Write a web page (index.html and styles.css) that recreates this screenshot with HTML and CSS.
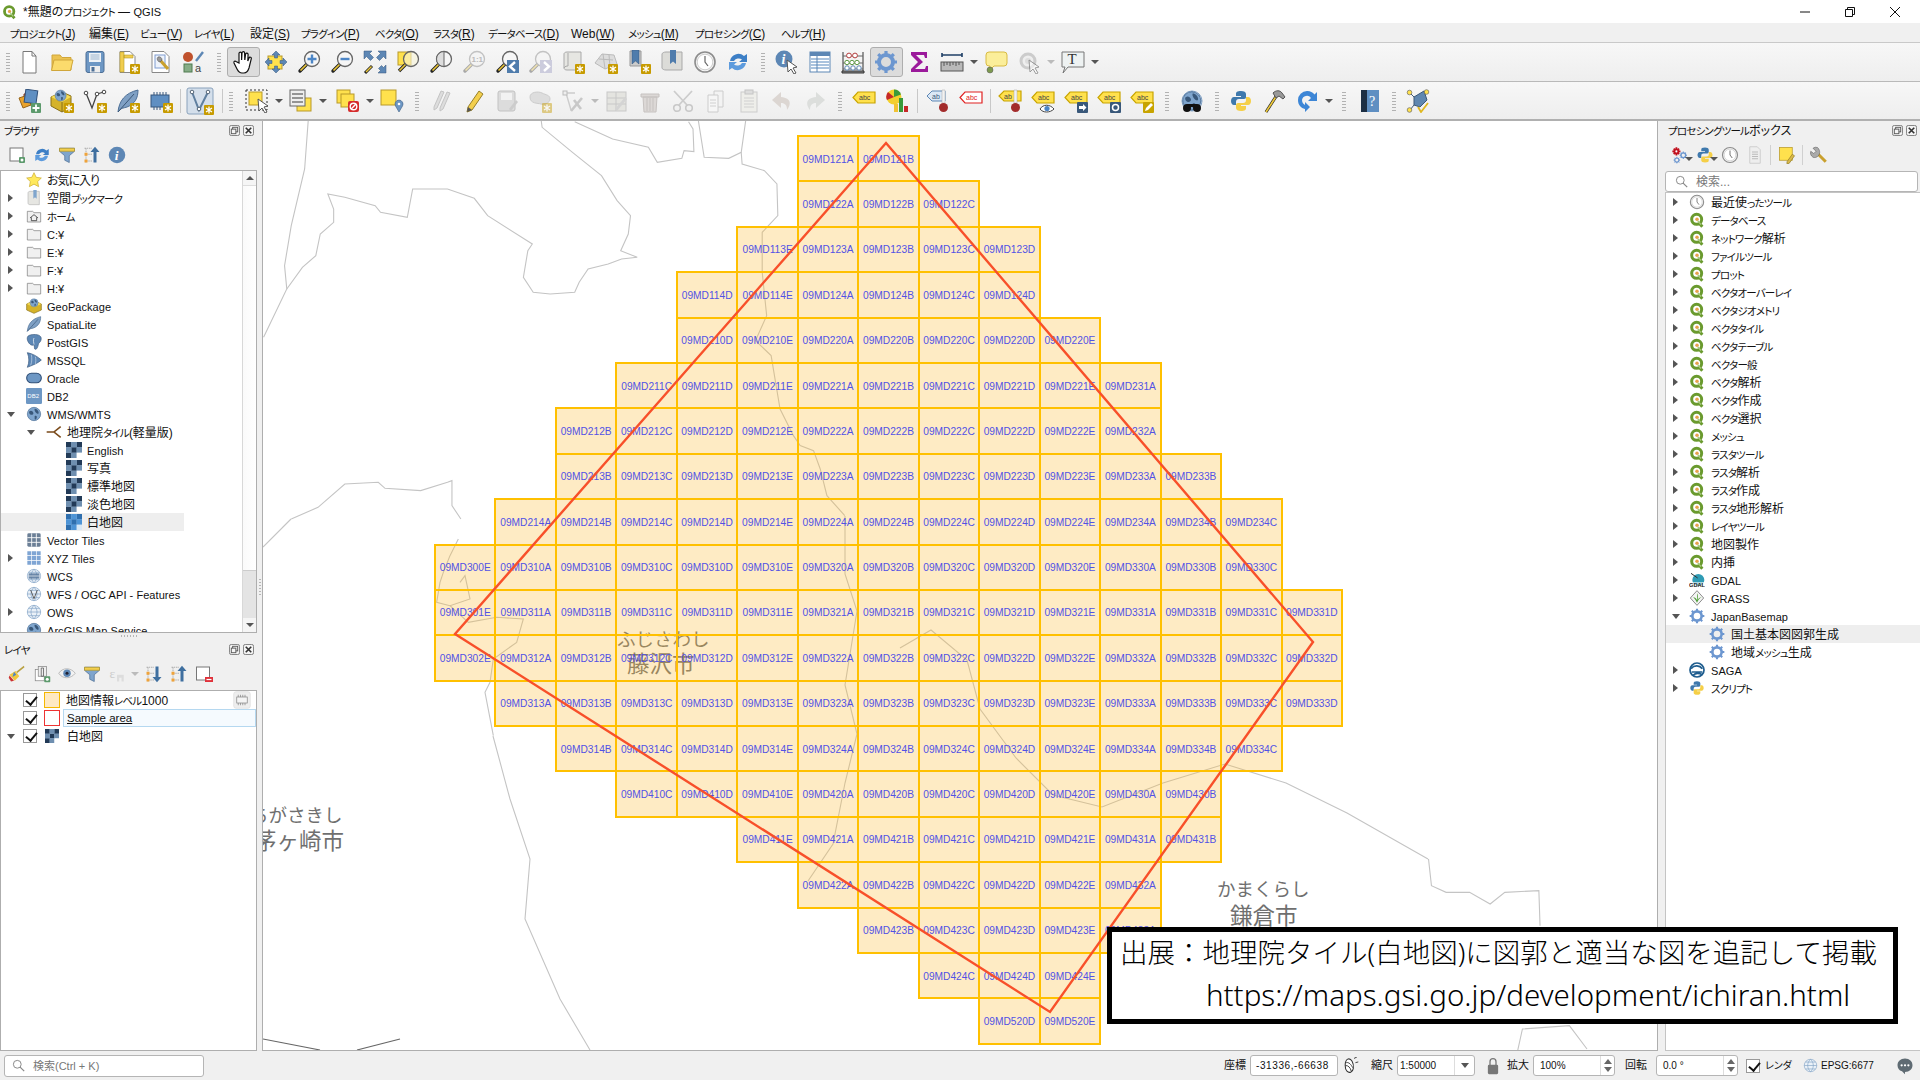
FILE: index.html
```html
<!DOCTYPE html>
<html lang="ja">
<head>
<meta charset="utf-8">
<title>*無題のプロジェクト — QGIS</title>
<link rel="stylesheet" href="styles.css">
</head>
<body>
<svg class="defs" aria-hidden="true">
<defs>
<g id="badge"><rect x="14" y="14" width="10" height="10" rx="1" fill="#c79b00"/><path d="M19 15.5v7M16 17l6 4M22 17l-6 4" stroke="#fff" stroke-width="1.3"/></g>
<g id="mag"><path d="M10 14L3 21" stroke="#222" stroke-width="3.4" stroke-linecap="round"/><path d="M9.5 14.5L3.5 20.5" stroke="#edc93a" stroke-width="1.6"/><circle cx="15" cy="9" r="7.5" fill="#f6f6f6" stroke="#666" stroke-width="1.3"/></g>
<g id="magd" opacity=".35"><use href="#mag"/></g>
<g id="tag"><path d="M6 3h17v11H6L1 8.500z" fill="#ffe14d" stroke="#c8a400" stroke-width="1.2"/><text x="7" y="11" font-size="7" font-family="Liberation Sans" fill="#444">abc</text></g>
<g id="globe"><circle cx="12" cy="12" r="10" fill="#7fa5cd" stroke="#4d6f96"/><path d="M5 8c3-2 5 0 6 2s-2 4-4 3-3-3-2-5zM13 4c3 0 6 3 6 6s-3 1-4 0-3-4-2-6zM13 15c2-1 4 0 3 3s-3 3-3 1z" fill="#39587a"/></g>
<g id="wire"><circle cx="12" cy="12" r="10" fill="#eaf1f8" stroke="#7fa0c4"/><path d="M2 12h20M12 2c-6 6-6 14 0 20M12 2c6 6 6 14 0 20M4 6.500h16M4 17.500h16" fill="none" stroke="#7fa0c4"/></g>
<g id="star"><path d="M12 1l3.300 7 7.700 1-5.500 5.300 1.400 7.700-6.900-3.800-6.900 3.800 1.400-7.700L1 9l7.700-1z" fill="#ffe95c" stroke="#c9a82a"/></g>
<g id="folder"><path d="M2 5h8l2 2h10v14H2z" fill="#f0f0f0" stroke="#777"/></g>
<g id="qlogo"><path d="M13 14l7 8" stroke="#6a9a2e" stroke-width="4.500"/><circle cx="11.500" cy="11" r="7.500" fill="#fff" stroke="#6a9a2e" stroke-width="4.500"/><circle cx="12" cy="11" r="2.600" fill="#e8a04a"/><path d="M13 13l5 6" stroke="#a9c97e" stroke-width="2"/></g>
<g id="tile"><path fill="#a9c2dc" d="M0 0h24v24H0z"/><path fill="#223a57" d="M0 0h8v8H0zM16 0h8v8h-8zM8 8h8v8H8zM0 16h8v8H0z"/><path fill="#6f8fb0" d="M8 0h8v8H8zM0 8h8v8H0zM16 8h8v8h-8zM8 16h8v8H8z"/><path fill="#fff" d="M16 16h8v8h-8z"/></g>
<g id="tileb"><path fill="#a9c8e8" d="M0 0h24v24H0z"/><path fill="#2f6fae" d="M0 0h8v8H0zM16 0h8v8h-8zM8 8h8v8H8zM0 16h8v8H0z"/><path fill="#4d94d6" d="M8 0h8v8H8zM0 8h8v8H0zM16 8h8v8h-8zM8 16h8v8H8z"/><path fill="#d7e8f7" d="M16 16h8v8h-8z"/></g>
<g id="gear"><circle cx="12" cy="12" r="7" fill="none" stroke="#6d97d0" stroke-width="4"/><path d="M12 1v5M12 18v5M1 12h5M18 12h5M4.200 4.200l3.500 3.500M16.300 16.300l3.500 3.500M19.800 4.200l-3.500 3.500M7.700 16.300l-3.500 3.500" stroke="#6d97d0" stroke-width="3.200"/></g>
<g id="pypy"><path d="M12 2c-4 0-5 1-5 3v2h5v1H5c-2 0-3 2-3 4s1 4 3 4h2v-3c0-2 1-3 3-3h5c1.500 0 2-1 2-2V5c0-2-2-3-5-3z" fill="#3f79ad"/><path d="M12 22c4 0 5-1 5-3v-2h-5v-1h7c2 0 3-2 3-4s-1-4-3-4h-2v3c0 2-1 3-3 3H9c-1.500 0-2 1-2 2v3c0 2 2 3 5 3z" fill="#f5cf47"/></g>
<g id="clock"><circle cx="12" cy="12" r="10" fill="#f4f4f4" stroke="#8d8d8d" stroke-width="1.600"/><circle cx="12" cy="12" r="7.800" fill="#fff" stroke="#cfcfcf"/><path d="M12 6v6l3 4" fill="none" stroke="#666" stroke-width="1.200"/></g>
<g id="cursor"><path d="M12 10l10 7-4 1 3 5-2 1-3-5-3 3z" fill="#fff" stroke="#555" stroke-width="1"/></g>
<g id="refr"><path d="M4 11a8.500 8.500 0 0 1 14-5l3-2v8h-8l3-2.500a5.500 5.500 0 0 0-8 1.500z" fill="#3d7fc6"/><path d="M20 13a8.500 8.500 0 0 1-14 5l-3 2v-8h8l-3 2.500a5.500 5.500 0 0 0 8-1.500z" fill="#5d9bdd"/></g>
<g id="filt"><path d="M2 3h20v4l-7 6v9l-6-3v-6L2 7z" fill="#7fa5cd" stroke="#4d6f96"/><path d="M2 3h20v4H2z" fill="#f3cf4d" stroke="#b59a2c"/></g>

<symbol id="i-new" viewBox="0 0 24 24"><path d="M6 1.500h9l4 4.500v17H6z" fill="#fff" stroke="#777"/><path d="M15 1.500V6h4" fill="none" stroke="#777"/></symbol>
<symbol id="i-open" viewBox="0 0 24 24"><path d="M2 20V5h8l2 2.500h9V20z" fill="#ecc352" stroke="#d0a63a"/><path d="M1.500 20.500L4 10h19l-2.500 10.500z" fill="#fbdb6c" stroke="#d0a63a"/></symbol>
<symbol id="i-save" viewBox="0 0 24 24"><rect x="3" y="1.500" width="18" height="21" rx="2" fill="#6d97c4" stroke="#4d6f96"/><path d="M6 3h12v9H6z" fill="#eef2f6"/><path d="M7.500 5h9M7.500 7h9M7.500 9h9" stroke="#9db6cf"/><path d="M7 16h10v6.500H7z" fill="#eee"/><path d="M8.500 17h3v4.500h-3z" fill="#4d6f96"/></symbol>
<symbol id="i-layout" viewBox="0 0 24 24"><path d="M4 1.500h10l5 5v16H4z" fill="#fff" stroke="#888"/><path d="M4 2h4v20H4zM8 5h9v3H8z" fill="#f1cd4e" stroke="#b69a2a" stroke-width=".6"/><use href="#badge"/></symbol>
<symbol id="i-lman" viewBox="0 0 24 24"><path d="M3 1.500h12l5 5v16H3z" fill="#fff" stroke="#888"/><rect x="6" y="5" width="10" height="13" fill="#eef3fb" stroke="#7f9cd0"/><path d="M11 10l8 9" stroke="#c9a02e" stroke-width="3.200"/><path d="M9 7a3 3 0 0 0 2 5l2-2a3 3 0 0 0-4-3z" fill="#999" stroke="#555" stroke-width=".6"/></symbol>
<symbol id="i-style" viewBox="0 0 24 24"><circle cx="6" cy="7" r="5" fill="#c0522d"/><path d="M14 11L21 2" stroke="#5d87b5" stroke-width="2.400"/><rect x="2" y="14" width="8" height="8" fill="#86ac86" stroke="#4f7a4f"/><text x="13" y="22" font-size="11" font-family="Liberation Sans" fill="#444">a</text></symbol>
<symbol id="i-hand" viewBox="0 0 24 24"><path d="M8 13V3.500a1.300 1.300 0 0 1 2.600 0V10l.4-7a1.300 1.300 0 0 1 2.600 0l.2 7 .8-6a1.300 1.300 0 0 1 2.500.3L16.800 11l1.200-3a1.200 1.200 0 0 1 2.300.7L18 18c-1 3-2 5-5 5h-2c-3 0-4-2-5-4l-3-6c-.5-1.500 1-2.500 2-1.500z" fill="#fff" stroke="#111" stroke-width="1.200"/></symbol>
<symbol id="i-pansel" viewBox="0 0 24 24"><rect x="4" y="6" width="14" height="13" fill="#ffe14d" stroke="#b8992a"/><path d="M12 1l4 4h-2.500v3h-3V5H8zM12 23l-4-4h2.500v-3h3v3H16zM1 12l4-4v2.500h3v3H5V16zM23 12l-4 4v-2.500h-3v-3h3V8z" fill="#5d87b5" stroke="#34567c" stroke-width=".5"/></symbol>
<symbol id="i-zin" viewBox="0 0 24 24"><use href="#mag"/><path d="M15 4.500v9M10.500 9h9" stroke="#4d86c6" stroke-width="2.400"/></symbol>
<symbol id="i-zout" viewBox="0 0 24 24"><use href="#mag"/><path d="M10.500 9h9" stroke="#4d86c6" stroke-width="2.400"/></symbol>
<symbol id="i-zfull" viewBox="0 0 24 24"><path d="M1 1h8L6.500 3.500l4 4-3 3-4-4L1 9zM23 1v8l-2.500-2.500-4 4-3-3 4-4L15 1zM23 23h-8l2.500-2.500-2-2 3-3 2 2L23 15z" fill="#5d87b5" stroke="#34567c" stroke-width=".5"/><g transform="translate(1 2)"><path d="M8 14L1 21" stroke="#222" stroke-width="3"/><path d="M7.500 14.500L2 20" stroke="#edc93a" stroke-width="1.400"/></g></symbol>
<symbol id="i-zsel" viewBox="0 0 24 24"><rect x="2" y="2" width="13" height="13" fill="#ffe14d" stroke="#b8992a"/><path d="M10 14L3 21" stroke="#222" stroke-width="3.400"/><path d="M9.500 14.500L3.500 20.500" stroke="#edc93a" stroke-width="1.600"/><circle cx="15" cy="9" r="7.500" fill="#f8f5d8" fill-opacity=".6" stroke="#666" stroke-width="1.300"/></symbol>
<symbol id="i-zlay" viewBox="0 0 24 24"><use href="#mag"/><path d="M15 1.500a7.500 7.500 0 0 0 0 15z" fill="#ddd" stroke="#666"/></symbol>
<symbol id="i-z11" viewBox="0 0 24 24"><use href="#magd"/><text x="9.500" y="12" font-size="8" font-weight="700" font-family="Liberation Sans" fill="#bbb">1:1</text></symbol>
<symbol id="i-zlast" viewBox="0 0 24 24"><use href="#mag"/><rect x="12" y="10" width="12" height="13" fill="#4f7cac"/><path d="M20 12l-5 4.500 5 4.500" fill="none" stroke="#fff" stroke-width="2.400"/></symbol>
<symbol id="i-znext" viewBox="0 0 24 24"><use href="#magd"/><rect x="12" y="10" width="12" height="13" fill="#ccd"/><path d="M16 12l5 4.500-5 4.500" fill="none" stroke="#fff" stroke-width="2.400"/></symbol>
<symbol id="i-mapv" viewBox="0 0 24 24"><path d="M6 2h14v18H6c-2 0-3-1-3-2V4c0-1 1-2 3-2z" fill="#e6e6e2" stroke="#a9a9a9"/><path d="M3 18c1-2 3-2 4-2V3" fill="none" stroke="#a9a9a9"/><use href="#badge"/></symbol>
<symbol id="i-map3" viewBox="0 0 24 24"><path d="M1 13L8 4l12 1 3 9-12 5z" fill="#ddd" stroke="#bbb"/><path d="M5 9l14 1M9 4l2 15M15 5l1 12" stroke="#bbb"/><use href="#badge"/></symbol>
<symbol id="i-bnew" viewBox="0 0 24 24"><path d="M3 1h11v15H3z" fill="#ccc" stroke="#999"/><path d="M5 0h7v14l-3.500-3L5 14z" fill="#4f7cac" stroke="#34567c" stroke-width=".5"/><use href="#badge"/></symbol>
<symbol id="i-bshow" viewBox="0 0 24 24"><path d="M6 2h16v18H6c-2 0-4-1-4-2V4c0-1 2-2 4-2z" fill="#dcdcd8" stroke="#a9a9a9"/><path d="M10 0h6v14l-3-2.500-3 2.500z" fill="#4f7cac"/></symbol>
<symbol id="i-clock" viewBox="0 0 24 24"><use href="#clock"/></symbol>
<symbol id="i-refr" viewBox="0 0 24 24"><use href="#refr"/></symbol>
<symbol id="i-ident" viewBox="0 0 24 24"><circle cx="9" cy="9" r="8.500" fill="#5d87b5"/><text x="6.500" y="14" font-size="14" font-weight="700" font-style="italic" font-family="Liberation Serif" fill="#fff">i</text><use href="#cursor"/></symbol>
<symbol id="i-attr" viewBox="0 0 24 24"><rect x="2" y="2" width="20" height="20" fill="#fff" stroke="#5d87b5"/><path d="M2 2h20v4H2z" fill="#5d87b5"/><path d="M3 9h18M3 12h18M3 15h18M3 18h18" stroke="#8fb0d4" stroke-width="1.500"/><path d="M9 6v16" stroke="#5d87b5"/></symbol>
<symbol id="i-abacus" viewBox="0 0 24 24"><path d="M2 21V2M22 21V2M1 21h22v2H1z" stroke="#333" fill="#888"/><path d="M2 6h20M2 13h20M2 19h20" stroke="#666"/><circle cx="8" cy="5.500" r="2.400" fill="#fff" stroke="#b43c3c"/><circle cx="14" cy="5.500" r="2.400" fill="#fff" stroke="#b43c3c"/><circle cx="6" cy="12.500" r="2.200" fill="#fff" stroke="#5e9a45"/><circle cx="11" cy="12.500" r="2.200" fill="#fff" stroke="#5e9a45"/><circle cx="16" cy="12.500" r="2.200" fill="#fff" stroke="#5e9a45"/><circle cx="6" cy="18" r="2.200" fill="#fff" stroke="#5d87b5"/><circle cx="12" cy="18" r="2.200" fill="#fff" stroke="#5d87b5"/><circle cx="18" cy="18" r="2.200" fill="#fff" stroke="#5d87b5"/></symbol>
<symbol id="i-gear" viewBox="0 0 24 24"><use href="#gear"/></symbol>
<symbol id="i-sigma" viewBox="0 0 24 24"><path d="M4 2h16v6h-2l-1-3H9l7 7-8 7h10l1-3h2v6H4v-3l7-7-7-7z" fill="#9b1a9b"/></symbol>
<symbol id="i-ruler" viewBox="0 0 24 24"><path d="M2 5h20M2 3v4M22 3v4" stroke="#1f3f66" stroke-width="1.600"/><rect x="1" y="12" width="22" height="9" fill="#b9b9b9" stroke="#555"/><path d="M4 12v4M7 12v3M10 12v4M13 12v3M16 12v4M19 12v3" stroke="#555"/></symbol>
<symbol id="i-tip" viewBox="0 0 24 24"><path d="M5 2h15a3 3 0 0 1 3 3v8a3 3 0 0 1-3 3H10l-5 5 1-5H5a3 3 0 0 1-3-3V5a3 3 0 0 1 3-3z" fill="#fbee9a" stroke="#d8bb42"/><circle cx="6" cy="20" r="3" fill="#7d9a4f" stroke="#555" stroke-width=".5"/></symbol>
<symbol id="i-gcur" viewBox="0 0 24 24"><circle cx="11" cy="11" r="7" fill="#eee" stroke="#ccc" stroke-width="3"/><circle cx="11" cy="11" r="3" fill="#ddd"/><g opacity=".55"><use href="#cursor"/></g></symbol>
<symbol id="i-tanno" viewBox="0 0 24 24"><path d="M1 2h22v15H7l-5 6 2-6H1z" fill="#eef2f2" stroke="#777"/><text x="6.500" y="14" font-size="15" font-family="Liberation Serif" fill="#333">T</text></symbol>

<symbol id="i-dsm" viewBox="0 0 24 24"><path d="M7 5l10-1 1 11-11 2z" fill="#d8622a" stroke="#8a3b16"/><path d="M2 9l9-3 3 10-8 3z" fill="#e9a22c" stroke="#96651b"/><path d="M8 1h12v13H8z" transform="rotate(8 14 7)" fill="#5f8fc2" stroke="#2f4f78"/><rect x="14" y="14" width="10" height="10" rx="1" fill="#5c9a6c"/><path d="M19 15.500v7M15.500 19h7" stroke="#fff" stroke-width="1.800"/></symbol>
<symbol id="i-gpkg" viewBox="0 0 24 24"><path d="M1 8l11-5 9 4v11l-9 5-11-6z" fill="#d5b32a" stroke="#88701a"/><path d="M1 8l11 5 9-5-9-5z" fill="#f7dc55"/><path d="M12 13v10" stroke="#88701a"/><g transform="translate(4 0) scale(.55)"><use href="#globe"/></g><use href="#badge"/></symbol>
<symbol id="i-shp" viewBox="0 0 24 24"><path d="M3 4l6 15 5-14 7-2" fill="none" stroke="#444" stroke-width="1.300"/><circle cx="3" cy="4" r="1.800" fill="#fff" stroke="#444"/><circle cx="14" cy="5" r="1.800" fill="#fff" stroke="#444"/><circle cx="21" cy="3" r="1.800" fill="#fff" stroke="#444"/><use href="#badge"/></symbol>
<symbol id="i-feather" viewBox="0 0 24 24"><path d="M2 23C3 12 9 4 22 1c0 8-3 14-11 17-3 1-6 1-7 3z" fill="#7fa0c4" stroke="#4d6f96"/><path d="M2 23L18 5" stroke="#3c5878"/></symbol>
<symbol id="i-fnew" viewBox="0 0 24 24"><use href="#i-feather"/><use href="#badge"/></symbol>
<symbol id="i-chip" viewBox="0 0 24 24"><rect x="2" y="6" width="18" height="12" fill="#5f8fc2" stroke="#36567c"/><path d="M5 3v3M8 3v3M11 3v3M14 3v3M17 3v3M5 18v3M8 18v3M11 18v3" stroke="#36567c"/><use href="#badge"/></symbol>
<symbol id="i-vbox" viewBox="0 0 28 28"><rect x="1" y="1" width="26" height="26" rx="2" fill="#d4dfeb" stroke="#8aa2bc"/><path d="M6 5l7 18 9-18" fill="none" stroke="#5f7f9f" stroke-width="2"/><circle cx="6" cy="5" r="1.800" fill="#fff" stroke="#567"/><circle cx="22" cy="5" r="1.800" fill="#fff" stroke="#567"/><circle cx="13" cy="22" r="1.800" fill="#fff" stroke="#567"/><g transform="translate(4 4)"><use href="#badge"/></g></symbol>
<symbol id="i-sel" viewBox="0 0 24 24"><rect x="1" y="1" width="21" height="20" fill="none" stroke="#333" stroke-dasharray="2 2"/><rect x="4" y="3" width="13" height="13" fill="#ffe14d" stroke="#b8992a"/><g transform="translate(1 0)"><use href="#cursor"/></g></symbol>
<symbol id="i-form" viewBox="0 0 24 24"><rect x="8" y="9" width="14" height="13" fill="#ffe14d" stroke="#b8992a"/><rect x="1" y="1" width="15" height="16" fill="#eee" stroke="#666"/><path d="M3 5h11M3 9h11M3 13h11" stroke="#777" stroke-width="1.600"/></symbol>
<symbol id="i-desel" viewBox="0 0 24 24"><rect x="1" y="1" width="13" height="13" fill="#ffe14d" stroke="#b8992a"/><rect x="5" y="5" width="13" height="13" fill="#ffe14d" stroke="#b8992a"/><rect x="12" y="12" width="11" height="11" rx="2" fill="#d52b2b"/><circle cx="17.500" cy="17.500" r="3.300" fill="none" stroke="#fff" stroke-width="1.400"/><path d="M15.200 20l4.800-5" stroke="#fff" stroke-width="1.400"/></symbol>
<symbol id="i-selloc" viewBox="0 0 24 24"><rect x="1" y="1" width="15" height="15" fill="#ffe14d" stroke="#b8992a"/><path d="M19 23l-3.500-6a4 4 0 1 1 7 0z" fill="#6d97c4" stroke="#3f5f85" stroke-width=".6"/><circle cx="19" cy="15" r="1.300" fill="#fff"/></symbol>
<symbol id="i-pens" viewBox="0 0 24 24"><path d="M5 18L12 2l3 1-7 16-3 2zM11 19L18 3l3 1-7 16-3 2z" fill="#ddd" stroke="#c4c4c4"/></symbol>
<symbol id="i-pen" viewBox="0 0 24 24"><path d="M6 18L17 2l4 3-11 16-5 2z" fill="#f3cf4d" stroke="#97802a"/><path d="M5 23l1-5 4 3z" fill="#555"/></symbol>
<symbol id="i-dsave" viewBox="0 0 24 24"><rect x="3" y="2" width="17" height="20" rx="2" fill="#dcdcdc" stroke="#c2c2c2"/><path d="M6 4h11v7H6z" fill="#f2f2f2"/><path d="M14 20l7-9 2 2-7 9z" fill="#ccc"/></symbol>
<symbol id="i-dadd" viewBox="0 0 24 24"><path d="M2 8c0-5 8-6 12-4s8 2 8 6-6 6-9 5-11 0-11-7z" fill="#ddd" stroke="#ccc"/><use href="#badge" opacity=".45"/></symbol>
<symbol id="i-dvert" viewBox="0 0 24 24"><path d="M4 4h10M5 4l5 17" stroke="#ccc" stroke-width="1.400" fill="none"/><rect x="2" y="2" width="4" height="4" fill="#eee" stroke="#bbb"/><path d="M10 22l11-13M13 11l7 9" stroke="#c8c8c8" stroke-width="2.600"/></symbol>
<symbol id="i-dedit" viewBox="0 0 24 24"><rect x="2" y="3" width="19" height="19" fill="#e4e4e0" stroke="#c8c8c8"/><path d="M2 9h19M2 15h19M11 3v19" stroke="#c8c8c8"/><path d="M10 20l10-12 2 2-10 12z" fill="#d4d4d4"/></symbol>
<symbol id="i-trash" viewBox="0 0 24 24"><path d="M3 5h18v3H3zM5 8h14l-1 15H6z" fill="#dcd8d6" stroke="#c6c2c0"/><path d="M9 9v13M12 9v13M15 9v13" stroke="#c6c2c0"/></symbol>
<symbol id="i-cut" viewBox="0 0 24 24"><path d="M3 2l13 14M21 2L8 16" stroke="#ccc" stroke-width="1.800"/><circle cx="6" cy="19" r="3.300" fill="none" stroke="#c8c8c8" stroke-width="1.600"/><circle cx="18" cy="19" r="3.300" fill="none" stroke="#c8c8c8" stroke-width="1.600"/></symbol>
<symbol id="i-copy" viewBox="0 0 24 24"><path d="M10 2h9v16H10z" fill="#f3f3f3" stroke="#ccc"/><path d="M4 6h10v17H4z" fill="#f6f6f6" stroke="#ccc"/><path d="M6 11h6M6 14h6M6 17h6" stroke="#d0d0d0"/></symbol>
<symbol id="i-paste" viewBox="0 0 24 24"><rect x="4" y="3" width="16" height="20" fill="#eeeeea" stroke="#ccc"/><rect x="8" y="1" width="8" height="4" fill="#ddd" stroke="#c4c4c4"/><path d="M7 9h10M7 12h10M7 15h10M7 18h10" stroke="#d0d0d0"/></symbol>
<symbol id="i-undo" viewBox="0 0 24 24"><path d="M11 3L2 11l9 8v-5c4 0 6 2 6 7 4-5 5-12-6-13z" fill="#dcd6d2"/></symbol>
<symbol id="i-redo" viewBox="0 0 24 24"><path d="M13 3l9 8-9 8v-5c-4 0-6 2-6 7-4-5-5-12 6-13z" fill="#dcdedc"/></symbol>
<symbol id="i-lab" viewBox="0 0 24 24"><use href="#tag"/></symbol>
<symbol id="i-pie" viewBox="0 0 24 24"><circle cx="9" cy="8" r="7.500" fill="#f3cf2d"/><path d="M9 8V.5a7.500 7.500 0 0 1 7 5z" fill="#3a9a3a"/><path d="M9 8L2 11a7.500 7.500 0 0 1 1-8z" fill="#c62828"/><rect x="9" y="15" width="4" height="8" fill="#f1c232"/><rect x="14" y="9" width="4" height="14" fill="#3a9a3a"/><rect x="19" y="17" width="4" height="6" fill="#c62828"/></symbol>
<symbol id="i-labt" viewBox="0 0 24 24"><path d="M6 2h13v10H6L1 7z" fill="#dbe8f6" stroke="#5d87b5"/><text x="6" y="10" font-size="7" font-family="Liberation Sans" fill="#39587a">ab</text><path d="M16 1h3v13h-3z" fill="#f2f2f2" stroke="#aaa" stroke-width=".5"/><circle cx="17.500" cy="18.500" r="4.500" fill="#a32c2c"/></symbol>
<symbol id="i-labr" viewBox="0 0 24 24"><path d="M6 3h17v11H6L1 8.500z" fill="#fff" stroke="#e02020" stroke-width="1.200"/><text x="7" y="11" font-size="7" font-family="Liberation Sans" fill="#e02020">abc</text></symbol>
<symbol id="i-labyt" viewBox="0 0 24 24"><path d="M6 2h17v10H6L1 7z" fill="#ffe14d" stroke="#c8a400" stroke-width="1.200"/><text x="6" y="10" font-size="7" font-family="Liberation Sans" fill="#444">ab</text><path d="M16 1h3v13h-3z" fill="#f2f2f2" stroke="#aaa" stroke-width=".5"/><circle cx="17.500" cy="18.500" r="4.500" fill="#a32c2c"/></symbol>
<symbol id="i-labe" viewBox="0 0 24 24"><use href="#tag"/><path d="M9 20c3-5 10-5 14 0-4 4-11 4-14 0z" fill="#fff" stroke="#444"/><circle cx="16" cy="19.500" r="2.600" fill="#4d86c6"/></symbol>
<symbol id="i-labm" viewBox="0 0 24 24"><use href="#tag"/><rect x="13" y="13" width="11" height="11" rx="1" fill="#39587a"/><path d="M15 17h4v-2l3.500 3.500L19 22v-2h-4z" fill="#fff"/></symbol>
<symbol id="i-labro" viewBox="0 0 24 24"><use href="#tag"/><rect x="13" y="13" width="11" height="11" rx="1" fill="#39587a"/><circle cx="18.500" cy="18.500" r="3" fill="none" stroke="#fff" stroke-width="1.500"/></symbol>
<symbol id="i-labp" viewBox="0 0 24 24"><use href="#tag"/><rect x="13" y="13" width="11" height="11" rx="1" fill="#c8a400"/><path d="M15 22l1-3 5-5 2 2-5 5z" fill="#fff"/></symbol>
<symbol id="i-bino" viewBox="0 0 24 24"><use href="#wire"/><g transform="translate(1 1) scale(.9)"><use href="#globe"/></g><circle cx="7" cy="19" r="4" fill="#111"/><circle cx="17" cy="19" r="4" fill="#111"/><path d="M7 15h10v3H7z" fill="#111"/></symbol>
<symbol id="i-py" viewBox="0 0 24 24"><use href="#pypy"/></symbol>
<symbol id="i-hammer" viewBox="0 0 24 24"><path d="M4 23L15 6" stroke="#222" stroke-width="3"/><path d="M4 23L15 6" stroke="#edc93a" stroke-width="1.700"/><path d="M11 4c3-3 7-3 9 0l3 4-2 2-4-3-3 2z" fill="#999" stroke="#555"/></symbol>
<symbol id="i-bundo" viewBox="0 0 24 24"><path d="M12 2a9 9 0 0 1 9 9c0 5-3 8-7 9v3l-5-5 5-5v3c2-1 3-3 3-5a5 5 0 0 0-9-2l3 3H2V3l2.500 2.500A9 9 0 0 1 12 2z" fill="#3d86d6" transform="matrix(-1 0 0 1 24 0)"/></symbol>
<symbol id="i-help" viewBox="0 0 24 24"><rect x="3" y="1" width="18" height="22" fill="#5f8fc2"/><rect x="3" y="1" width="6" height="22" fill="#1c2f44"/><text x="11" y="17" font-size="14" font-family="Liberation Serif" fill="#fff">?</text></symbol>
<symbol id="i-topo" viewBox="0 0 24 24"><path d="M8 8l10-6 3 9-7 7-6-2z" fill="#5f87b0" stroke="#3c5878"/><path d="M3 3l5 5M4 21l4-5M21 2l-3 1" stroke="#3c5878"/><circle cx="3.500" cy="3.500" r="2.300" fill="#ffe14d" stroke="#555" stroke-width=".6"/><circle cx="20.500" cy="3" r="2.300" fill="#ffe14d" stroke="#555" stroke-width=".6"/><circle cx="3.500" cy="21" r="2.300" fill="#ffe14d" stroke="#555" stroke-width=".6"/><path d="M12 18l3 5 7-9" fill="none" stroke="#e0b820" stroke-width="1.800"/></symbol>

<symbol id="p-add" viewBox="0 0 18 18"><rect x="2" y="2" width="13" height="13" fill="#fff" stroke="#777"/><rect x="11" y="11" width="6" height="6" rx="1" fill="#5c9a6c"/><circle cx="14" cy="14" r="1.500" fill="#fff"/></symbol>
<symbol id="p-info" viewBox="0 0 24 24"><circle cx="12" cy="12" r="11" fill="#5d87b5"/><text x="9" y="19" font-size="18" font-weight="700" font-style="italic" font-family="Liberation Serif" fill="#fff">i</text></symbol>
<symbol id="p-refr" viewBox="0 0 24 24"><use href="#refr"/></symbol>
<symbol id="p-filt" viewBox="0 0 24 24"><use href="#filt"/></symbol>
<symbol id="p-coll" viewBox="0 0 24 24"><path d="M2 3h10M4 3v19M4 11h8M4 20h8" stroke="#999" fill="none" stroke-dasharray="2 1"/><rect x="2" y="9" width="4" height="4" fill="#f0a33a"/><rect x="2" y="18" width="4" height="4" fill="#f0a33a"/><path d="M16 1l6 7h-4v14h-4V8h-4z" fill="#3f6f9f"/></symbol>
<symbol id="p-exp" viewBox="0 0 24 24"><path d="M2 3h10M4 3v19M4 11h8M4 20h8" stroke="#999" fill="none" stroke-dasharray="2 1"/><rect x="2" y="9" width="4" height="4" fill="#f0a33a"/><rect x="2" y="18" width="4" height="4" fill="#f0a33a"/><path d="M16 23l6-7h-4V2h-4v14h-4z" fill="#3f6f9f"/></symbol>
<symbol id="p-brush" viewBox="0 0 24 24"><path d="M12 11l10-8-1-2-10 8z" fill="#b8a040"/><path d="M2 13l8-5 5 7-6 6z" fill="#f1c83e"/><path d="M2 14l6 7-4 1-3-5z" fill="#c33"/><path d="M8 9l3 4-5 3z" fill="#4d86c6"/></symbol>
<symbol id="p-grp" viewBox="0 0 24 24"><rect x="3" y="6" width="12" height="15" fill="#fff" stroke="#888"/><rect x="7" y="2" width="11" height="13" fill="#eee" stroke="#888"/><path d="M11 4h3v11h-3z" fill="none" stroke="#555"/><rect x="15" y="15" width="8" height="8" rx="1" fill="#5c9a6c"/><circle cx="19" cy="19" r="2" fill="#fff"/></symbol>
<symbol id="p-eye" viewBox="0 0 24 24"><path d="M1 11c5-8 16-8 22 0-6 8-17 8-22 0z" fill="#f2f2f2" stroke="#aaa"/><circle cx="12" cy="11" r="5" fill="#5d87b5"/><circle cx="12" cy="11" r="2" fill="#223"/></symbol>
<symbol id="p-eps" viewBox="0 0 24 24"><text x="2" y="17" font-size="18" font-family="Liberation Serif" fill="#ccc">ε</text><path d="M12 13h9v9h-3v-5h-3v5h-3z" fill="#ddd"/></symbol>
<symbol id="p-rem" viewBox="0 0 18 18"><rect x="1.500" y="2" width="13" height="13" fill="#fff" stroke="#777"/><rect x="10" y="12" width="8" height="5" fill="#e0313a"/><path d="M11.500 14.500h5" stroke="#fff" stroke-width="1.200"/></symbol>
<symbol id="p-gears" viewBox="0 0 24 24"><g transform="scale(.6)"><path d="M12 3v18M3 12h18M6 6l12 12M18 6L6 18" stroke="#c1121f" stroke-width="4"/><circle cx="12" cy="12" r="6.500" fill="#c1121f"/><circle cx="12" cy="12" r="2.300" fill="#fff"/></g><g transform="translate(11 7) scale(.45)"><use href="#gear"/></g><g transform="translate(3 14) scale(.4)"><use href="#gear"/></g></symbol>
<symbol id="p-doc" viewBox="0 0 24 24"><path d="M5 1h10l4 4v18H5z" fill="#eee" stroke="#c4c4c4"/><path d="M8 8h8M8 11h8M8 14h8M8 17h8" stroke="#bbb" stroke-width="1.400"/></symbol>
<symbol id="p-ypen" viewBox="0 0 24 24"><rect x="2" y="2" width="17" height="17" fill="#ffe14d" stroke="#b8992a"/><path d="M12 21l7-10 3 2-7 10-3 1z" fill="#d9b84a" stroke="#96802a"/></symbol>
<symbol id="p-wrench" viewBox="0 0 24 24"><path d="M10 10l11 11" stroke="#c9a02e" stroke-width="4"/><path d="M9 2a6 6 0 0 0-6 1l4 4-3 3-4-3c-1 3 0 6 3 8 2 1 5 0 6-1l1-1c2-2 3-6 0-10z" transform="translate(1 0)" fill="#aaa" stroke="#555" stroke-width=".7"/></symbol>
<symbol id="p-search" viewBox="0 0 16 16"><circle cx="6.500" cy="6.500" r="4.800" fill="none" stroke="#888" stroke-width="1.200"/><path d="M10 10l5 5" stroke="#888" stroke-width="1.500"/></symbol>

<symbol id="t-star" viewBox="0 0 24 24"><use href="#star"/></symbol>
<symbol id="t-book" viewBox="0 0 24 24"><path d="M6 2h14v20H6c-2 0-3-1-3-3V5c0-2 1-3 3-3z" fill="#e6e6e2" stroke="#b8b8b8"/><path d="M11 0h5v13l-2.500-2-2.500 2z" fill="#7fa5cd"/></symbol>
<symbol id="t-home" viewBox="0 0 24 24"><use href="#folder"/><path d="M6 15l6-5 6 5M8 14v5h8v-5" fill="none" stroke="#333" stroke-width="1.200"/></symbol>
<symbol id="t-folder" viewBox="0 0 24 24"><use href="#folder"/></symbol>
<symbol id="t-gpkg" viewBox="0 0 24 24"><path d="M1 9l11-5 11 5v9l-11 5-11-5z" fill="#d5b32a" stroke="#88701a"/><path d="M1 9l11 5 11-5-11-5z" fill="#f7dc55"/><g transform="translate(5 0) scale(.6)"><use href="#globe"/></g></symbol>
<symbol id="t-feather" viewBox="0 0 24 24"><use href="#i-feather"/></symbol>
<symbol id="t-pg" viewBox="0 0 24 24"><path d="M5 2c5-2 14-2 17 2 2 3 0 8-3 10-1 4-2 9-5 9-2 0-1-5-2-7-3 2-6 0-8-3S0 4 5 2z" fill="#5d87b5" stroke="#36567c"/><path d="M12 6c-2 3 0 8 0 10" stroke="#fff" fill="none"/></symbol>
<symbol id="t-ms" viewBox="0 0 24 24"><path d="M2 1c7 1 16 6 21 11-5 5-14 8-21 11 3-7 3-15 0-22z" fill="#5d87b5" stroke="#36567c"/><path d="M8 4c1 5 1 11-1 16M14 7c1 4 1 7 0 11" stroke="#c8d8ea" fill="none"/></symbol>
<symbol id="t-ora" viewBox="0 0 24 24"><rect x="1" y="5" width="22" height="14" rx="7" fill="#6d97c4" stroke="#2f4f78" stroke-width="1.600"/></symbol>
<symbol id="t-db2" viewBox="0 0 24 24"><rect x="0" y="0" width="24" height="24" rx="2" fill="#6d97c4"/><text x="2" y="15.500" font-size="9" font-family="Liberation Sans" fill="#fff">DB2</text></symbol>
<symbol id="t-globe" viewBox="0 0 24 24"><use href="#globe"/></symbol>
<symbol id="t-conn" viewBox="0 0 24 24"><path d="M1 12h13M22 4L12 12l10 8" fill="none" stroke="#7a4a1a" stroke-width="2.400"/></symbol>
<symbol id="t-tile" viewBox="0 0 24 24"><use href="#tile"/></symbol>
<symbol id="t-tileb" viewBox="0 0 24 24"><use href="#tileb"/></symbol>
<symbol id="t-vt" viewBox="0 0 24 24"><rect x="2" y="2" width="20" height="20" rx="2" fill="#6b7f96"/><path d="M8.500 2v20M15.500 2v20M2 8.500h20M2 15.500h20" stroke="#fff" stroke-width="1.300"/></symbol>
<symbol id="t-xyz" viewBox="0 0 24 24"><path fill="#7fa5d4" d="M2 2h6v6H2zM9 2h6v6H9zM16 2h6v6h-6zM2 9h6v6H2zM9 9h6v6H9zM16 9h6v6h-6zM2 16h6v6H2zM9 16h6v6H9zM16 16h6v6h-6z"/></symbol>
<symbol id="t-wcs" viewBox="0 0 24 24"><use href="#wire"/><path d="M4 8h16v8H4z" fill="#4d6f96" opacity=".8"/><path d="M2 12h20" stroke="#fff"/></symbol>
<symbol id="t-wfs" viewBox="0 0 24 24"><use href="#wire"/><path d="M7 6l5 13 5-13" fill="none" stroke="#555" stroke-width="1.400"/></symbol>
<symbol id="t-ows" viewBox="0 0 24 24"><use href="#wire"/></symbol>
<symbol id="t-q" viewBox="0 0 24 24"><use href="#qlogo"/></symbol>
<symbol id="t-clock" viewBox="0 0 24 24"><use href="#clock"/></symbol>
<symbol id="t-gdal" viewBox="0 0 24 24"><circle cx="14" cy="12" r="9" fill="#2f9cb5"/><path d="M3 2l10 7" stroke="#333" stroke-width="1.500"/><path d="M1 15h22v8H1z" fill="#fff" opacity=".6"/><text x="0" y="23" font-size="8.500" font-weight="700" font-family="Liberation Sans" fill="#111">GDAL</text></symbol>
<symbol id="t-grass" viewBox="0 0 24 24"><path d="M12 1l10 11-10 11L2 12z" fill="#f4f4f4" stroke="#555"/><path d="M12 19c-2-4-4-7-6-8 3 0 5 2 6 4 0-3 0-7 1-10 1 3 0 7 0 10 1-2 3-4 6-4-3 1-5 4-7 8z" fill="#4f9e3a"/></symbol>
<symbol id="t-gear" viewBox="0 0 24 24"><use href="#gear"/></symbol>
<symbol id="t-saga" viewBox="0 0 24 24"><circle cx="12" cy="12" r="10.500" fill="none" stroke="#1f5d8e" stroke-width="2.600"/><path d="M3 10c5-6 13-5 17 0M4 15h16M6 20c4-4 10-3 14-1" fill="none" stroke="#1f5d8e" stroke-width="2.600"/></symbol>
<symbol id="t-py" viewBox="0 0 24 24"><use href="#pypy"/></symbol>

<symbol id="s-float" viewBox="0 0 12 12"><rect x=".5" y=".5" width="11" height="11" rx="2" fill="#f4f4f4" stroke="#777"/><rect x="4" y="2.500" width="5.500" height="5" fill="none" stroke="#555"/><rect x="2.500" y="4.500" width="5" height="5" fill="#f4f4f4" stroke="#555"/></symbol>
<symbol id="s-close" viewBox="0 0 12 12"><rect x=".5" y=".5" width="11" height="11" rx="2" fill="#f4f4f4" stroke="#777"/><path d="M3 3l6 6M9 3L3 9" stroke="#333" stroke-width="1.800"/></symbol>
<symbol id="s-mem" viewBox="0 0 24 24"><rect x="1" y="1" width="22" height="22" rx="3" fill="#eee" stroke="#ddd"/><rect x="5" y="8" width="14" height="8" fill="#f4f4f4" stroke="#888"/><path d="M7 5v3M10 5v3M13 5v3M16 5v3M7 16v3M10 16v3M13 16v3M16 16v3" stroke="#888"/></symbol>
<symbol id="s-mouse" viewBox="0 0 24 24"><path d="M8 3c5-2 9 6 8 13-1 6-6 7-9 4S3 6 8 3z" fill="#fff" stroke="#333" stroke-width="1.500"/><path d="M6 8c4-1 7 3 9 7M5 12c4 0 7 3 8 8M17 2l4-2M19 8l4-1" stroke="#333" stroke-width="1.300" fill="none"/></symbol>
<symbol id="s-lock" viewBox="0 0 14 20"><path d="M3.500 9V5a3.500 3.500 0 0 1 7 0v4" fill="none" stroke="#777" stroke-width="1.500"/><rect x="1" y="8.500" width="12" height="11" rx="1.500" fill="#777"/></symbol>
<symbol id="s-chat" viewBox="0 0 24 24"><path d="M12 2c6 0 10 4 10 9s-4 9-10 9v3l-4-4c-4-1-6-4-6-8 0-5 4-9 10-9z" fill="#5f6b73"/><circle cx="7.500" cy="11" r="1.500" fill="#fff"/><circle cx="12" cy="11" r="1.500" fill="#fff"/><circle cx="16.500" cy="11" r="1.500" fill="#fff"/></symbol>
</defs>
</svg>

<header class="titlebar">
  <svg class="tlogo"><use href="#t-q"/></svg>
  <span class="ttext">*無題の<em>プロジェクト</em> — <span class="en">QGIS</span></span>
  <div class="winctl">
    <svg viewBox="0 0 12 12"><path d="M1 6h10" stroke="#111"/></svg>
    <svg viewBox="0 0 12 12"><path d="M1.500 3.500h7v7h-7zM3.500 3.500v-2h7v7h-2" fill="none" stroke="#111"/></svg>
    <svg viewBox="0 0 12 12"><path d="M1 1l10 10M11 1L1 11" stroke="#111"/></svg>
  </div>
</header>

<nav class="menubar">
  <span><em>プロジェクト</em>(<u>J</u>)</span><span>編集(<u>E</u>)</span><span><em>ビュー</em>(<u>V</u>)</span><span><em>レイヤ</em>(<u>L</u>)</span><span>設定(<u>S</u>)</span><span><em>プラグイン</em>(<u>P</u>)</span><span><em>ベクタ</em>(<u>O</u>)</span><span><em>ラスタ</em>(<u>R</u>)</span><span><em>データベース</em>(<u>D</u>)</span><span>Web(<u>W</u>)</span><span><em>メッシュ</em>(<u>M</u>)</span><span><em>プロセシング</em>(<u>C</u>)</span><span><em>ヘルプ</em>(<u>H</u>)</span>
</nav>

<div class="toolbar">
  <i class="hd first"></i>
  <span class="ic"><svg><use href="#i-new"/></svg></span>
  <span class="ic"><svg><use href="#i-open"/></svg></span>
  <span class="ic"><svg><use href="#i-save"/></svg></span>
  <span class="ic"><svg><use href="#i-layout"/></svg></span>
  <span class="ic"><svg><use href="#i-lman"/></svg></span>
  <span class="ic"><svg><use href="#i-style"/></svg></span>
  <i class="hd"></i>
  <span class="ic on"><svg><use href="#i-hand"/></svg></span>
  <span class="ic"><svg><use href="#i-pansel"/></svg></span>
  <span class="ic"><svg><use href="#i-zin"/></svg></span>
  <span class="ic"><svg><use href="#i-zout"/></svg></span>
  <span class="ic"><svg><use href="#i-zfull"/></svg></span>
  <span class="ic"><svg><use href="#i-zsel"/></svg></span>
  <span class="ic"><svg><use href="#i-zlay"/></svg></span>
  <span class="ic"><svg><use href="#i-z11"/></svg></span>
  <span class="ic"><svg><use href="#i-zlast"/></svg></span>
  <span class="ic"><svg><use href="#i-znext"/></svg></span>
  <span class="ic"><svg><use href="#i-mapv"/></svg></span>
  <span class="ic"><svg><use href="#i-map3"/></svg></span>
  <span class="ic"><svg><use href="#i-bnew"/></svg></span>
  <span class="ic"><svg><use href="#i-bshow"/></svg></span>
  <span class="ic"><svg><use href="#i-clock"/></svg></span>
  <span class="ic"><svg><use href="#i-refr"/></svg></span>
  <i class="hd"></i>
  <span class="ic"><svg><use href="#i-ident"/></svg></span>
  <span class="ic"><svg><use href="#i-attr"/></svg></span>
  <span class="ic"><svg><use href="#i-abacus"/></svg></span>
  <span class="ic on"><svg><use href="#i-gear"/></svg></span>
  <span class="ic"><svg><use href="#i-sigma"/></svg></span>
  <span class="ic"><svg><use href="#i-ruler"/></svg></span><i class="dd"></i>
  <span class="ic"><svg><use href="#i-tip"/></svg></span>
  <span class="ic"><svg><use href="#i-gcur"/></svg></span><i class="dd off"></i>
  <span class="ic"><svg><use href="#i-tanno"/></svg></span><i class="dd"></i>
</div>

<div class="toolbar second">
  <i class="hd first"></i>
  <span class="ic"><svg><use href="#i-dsm"/></svg></span>
  <span class="ic"><svg><use href="#i-gpkg"/></svg></span>
  <span class="ic"><svg><use href="#i-shp"/></svg></span>
  <span class="ic"><svg><use href="#i-fnew"/></svg></span>
  <span class="ic"><svg><use href="#i-chip"/></svg></span>
  <i class="sp"></i>
  <span class="ic"><svg class="big"><use href="#i-vbox"/></svg></span>
  <i class="sp wide"></i><i class="hd short"></i>
  <span class="ic"><svg><use href="#i-sel"/></svg></span><i class="dd"></i>
  <span class="ic"><svg><use href="#i-form"/></svg></span><i class="dd"></i>
  <span class="ic push3"><svg><use href="#i-desel"/></svg></span><i class="dd"></i>
  <span class="ic"><svg><use href="#i-selloc"/></svg></span>
  <i class="hd"></i>
  <span class="ic"><svg><use href="#i-pens"/></svg></span>
  <span class="ic"><svg><use href="#i-pen"/></svg></span>
  <span class="ic"><svg><use href="#i-dsave"/></svg></span>
  <span class="ic"><svg><use href="#i-dadd"/></svg></span>
  <span class="ic"><svg><use href="#i-dvert"/></svg></span><i class="dd off"></i>
  <span class="ic"><svg><use href="#i-dedit"/></svg></span>
  <span class="ic"><svg><use href="#i-trash"/></svg></span>
  <span class="ic"><svg><use href="#i-cut"/></svg></span>
  <span class="ic"><svg><use href="#i-copy"/></svg></span>
  <span class="ic"><svg><use href="#i-paste"/></svg></span>
  <span class="ic"><svg><use href="#i-undo"/></svg></span>
  <span class="ic"><svg><use href="#i-redo"/></svg></span>
  <i class="hd"></i>
  <span class="ic"><svg><use href="#i-lab"/></svg></span>
  <span class="ic"><svg><use href="#i-pie"/></svg></span>
  <i class="sp mid"></i>
  <span class="ic"><svg><use href="#i-labt"/></svg></span>
  <span class="ic"><svg><use href="#i-labr"/></svg></span>
  <i class="sp"></i>
  <span class="ic"><svg><use href="#i-labyt"/></svg></span>
  <span class="ic"><svg><use href="#i-labe"/></svg></span>
  <span class="ic"><svg><use href="#i-labm"/></svg></span>
  <span class="ic"><svg><use href="#i-labro"/></svg></span>
  <span class="ic"><svg><use href="#i-labp"/></svg></span>
  <i class="hd w17"></i>
  <span class="ic"><svg><use href="#i-bino"/></svg></span>
  <i class="hd"></i>
  <span class="ic"><svg><use href="#i-py"/></svg></span>
  <span class="ic"><svg><use href="#i-hammer"/></svg></span>
  <span class="ic"><svg><use href="#i-bundo"/></svg></span><i class="dd"></i>
  <i class="hd w19"></i>
  <span class="ic"><svg><use href="#i-help"/></svg></span>
  <i class="hd w15"></i>
  <span class="ic"><svg><use href="#i-topo"/></svg></span>
</div>

<main class="main">
  <aside class="leftdock">
    <section class="dock browser">
      <div class="dockhead"><span><em>ブラウザ</em></span><span class="dockbtn"><svg><use href="#s-float"/></svg><svg><use href="#s-close"/></svg></span></div>
      <div class="dtools">
        <span class="pt"><svg><use href="#p-add"/></svg></span>
        <span class="pt"><svg><use href="#p-refr"/></svg></span>
        <span class="pt"><svg><use href="#p-filt"/></svg></span>
        <span class="pt"><svg><use href="#p-coll"/></svg></span>
        <span class="pt"><svg><use href="#p-info"/></svg></span>
      </div>
      <div class="tree bt">
        <div class="list">
          <div class="row"><i class="tw"></i><svg><use href="#t-star"/></svg><span class="tight">お気に入り</span></div>
          <div class="row"><i class="tw"><b class="ar"></b></i><svg><use href="#t-book"/></svg><span>空間<em>ブックマーク</em></span></div>
          <div class="row"><i class="tw"><b class="ar"></b></i><svg><use href="#t-home"/></svg><span><em>ホーム</em></span></div>
          <div class="row"><i class="tw"><b class="ar"></b></i><svg><use href="#t-folder"/></svg><span class="en">C:¥</span></div>
          <div class="row"><i class="tw"><b class="ar"></b></i><svg><use href="#t-folder"/></svg><span class="en">E:¥</span></div>
          <div class="row"><i class="tw"><b class="ar"></b></i><svg><use href="#t-folder"/></svg><span class="en">F:¥</span></div>
          <div class="row"><i class="tw"><b class="ar"></b></i><svg><use href="#t-folder"/></svg><span class="en">H:¥</span></div>
          <div class="row"><i class="tw"></i><svg><use href="#t-gpkg"/></svg><span class="en">GeoPackage</span></div>
          <div class="row"><i class="tw"></i><svg><use href="#t-feather"/></svg><span class="en">SpatiaLite</span></div>
          <div class="row"><i class="tw"></i><svg><use href="#t-pg"/></svg><span class="en">PostGIS</span></div>
          <div class="row"><i class="tw"></i><svg><use href="#t-ms"/></svg><span class="en">MSSQL</span></div>
          <div class="row"><i class="tw"></i><svg><use href="#t-ora"/></svg><span class="en">Oracle</span></div>
          <div class="row"><i class="tw"></i><svg><use href="#t-db2"/></svg><span class="en">DB2</span></div>
          <div class="row"><i class="tw"><b class="ad"></b></i><svg><use href="#t-globe"/></svg><span class="en">WMS/WMTS</span></div>
          <div class="row l1"><i class="tw"><b class="ad"></b></i><svg><use href="#t-conn"/></svg><span>地理院<em>タイル</em>(軽量版)</span></div>
          <div class="row l2"><i class="tw"></i><svg><use href="#t-tile"/></svg><span class="en">English</span></div>
          <div class="row l2"><i class="tw"></i><svg><use href="#t-tile"/></svg><span>写真</span></div>
          <div class="row l2"><i class="tw"></i><svg><use href="#t-tile"/></svg><span>標準地図</span></div>
          <div class="row l2"><i class="tw"></i><svg><use href="#t-tile"/></svg><span>淡色地図</span></div>
          <div class="row l2 sel"><i class="tw"></i><svg><use href="#t-tileb"/></svg><span>白地図</span></div>
          <div class="row"><i class="tw"></i><svg><use href="#t-vt"/></svg><span class="en">Vector Tiles</span></div>
          <div class="row"><i class="tw"><b class="ar"></b></i><svg><use href="#t-xyz"/></svg><span class="en">XYZ Tiles</span></div>
          <div class="row"><i class="tw"></i><svg><use href="#t-wcs"/></svg><span class="en">WCS</span></div>
          <div class="row"><i class="tw"></i><svg><use href="#t-wfs"/></svg><span class="en">WFS / OGC API - Features</span></div>
          <div class="row"><i class="tw"><b class="ar"></b></i><svg><use href="#t-ows"/></svg><span class="en">OWS</span></div>
          <div class="row"><i class="tw"></i><svg><use href="#t-globe"/></svg><span class="en">ArcGIS Map Service</span></div>
        </div>
        <div class="vscroll"><i class="up"></i><i class="thumb"></i><i class="trk"></i><i class="down"></i></div>
      </div>
    </section>
    <div class="hgrip"></div>
    <section class="dock layers">
      <div class="dockhead"><span><em>レイヤ</em></span><span class="dockbtn"><svg><use href="#s-float"/></svg><svg><use href="#s-close"/></svg></span></div>
      <div class="dtools tall">
        <span class="pt"><svg><use href="#p-brush"/></svg></span>
        <span class="pt"><svg><use href="#p-grp"/></svg></span>
        <span class="pt"><svg><use href="#p-eye"/></svg></span>
        <span class="pt"><svg><use href="#p-filt"/></svg></span>
        <span class="pt"><svg><use href="#p-eps"/></svg></span><i class="dd off small"></i>
        <span class="pt"><svg><use href="#p-exp"/></svg></span>
        <span class="pt"><svg><use href="#p-coll"/></svg></span>
        <span class="pt"><svg><use href="#p-rem"/></svg></span>
      </div>
      <div class="tree lt">
        <div class="lrow"><i class="tw2"></i><i class="chk"></i><i class="swatch fillsw"></i><span class="lname">地図情報<em>レベル</em>1000</span><svg class="memi"><use href="#s-mem"/></svg></div>
        <div class="lrow"><i class="tw2"></i><i class="chk"></i><i class="swatch redsw"></i><span class="lname cur"><u>Sample area</u></span></div>
        <div class="lrow"><i class="tw2"><b class="ad"></b></i><i class="chk"></i><svg class="lt-ic"><use href="#t-tile"/></svg><span class="lname">白地図</span></div>
      </div>
    </section>
  </aside>

  <div class="vgrip"></div>

  <div class="canvas">
    <svg class="basemap" viewBox="263 122 1394 929">
      <g class="coast" transform="translate(260 120) scale(.4464 .3333)">
        <polyline points="108,5 100,150 70,320 55,440 60,510 8,655"/>
        <polyline points="60,510 95,445 125,410 135,345 165,310 165,270 152,225 190,235 258,260 270,280 330,295 342,210 420,210 480,238 510,290 610,375 600,395 590,475 612,520 650,525 705,520 715,490 735,450 780,435 810,420 845,415 808,395 825,345 830,290 800,245 765,170 700,100 632,25 630,5"/>
        <polyline points="705,8 790,60 870,85 890,130 945,118 950,95 972,98 970,30 960,8"/>
        <polyline points="982,5 995,115 1050,118 1078,100 1088,5"/>
        <polyline points="1078,100 1080,135 1130,155 1158,195 1160,290 1125,340 1125,460 1135,590 1110,665 1145,710 1165,870 1195,950 1210,980 1240,995 1255,1050 1270,1130 1310,1190"/>
        <polyline points="70,1200 130,1165 190,1095 265,1090 280,1108 360,1115 420,1090 430,1085 430,1160 450,1200"/>
      </g>
      <g class="coast" transform="translate(430 540) scale(.3333)">
        <polyline points="85,0 60,50 40,100 30,130 20,190 60,200 120,180 105,110 90,130"/>
        <polyline points="60,200 115,250 200,235 280,240 260,310 190,360 180,430 165,460 190,590"/>
      </g>
      <g class="coast" transform="translate(1000 860) scale(.587 .3333)">
        <polyline points="730,0 735,80 760,100 800,100 835,135 860,100 918,95 920,200"/>
        <polyline points="880,590 890,510 970,500 1000,570"/>
      </g>
      <g class="coast">
        <polyline points="845,517 845,575 857,612 851,649 845,686 857,735 845,784 833,845 808,882"/>
        <polyline points="900,649 931,631 967,661 980,710 1016,759 1053,796 1102,808 1163,784 1225,765 1286,784 1347,814 1428,860"/>
        <polyline points="291,520 263,548"/>
        <polyline points="493,737 510,800 530,860 525,920 560,1000 590,1051"/>
        <polyline class="dark" points="263,1040 320,1051"/>
        <polyline class="dark" points="357,1051 400,1040"/>
      </g>
    </svg>
    <span class="place kana p1">ふじさわし</span>
    <span class="place kanji p2">藤沢市</span>
    <span class="place kana p3">ちがさきし</span>
    <span class="place kanji p4">茅ヶ崎市</span>
    <span class="place kana p5">かまくらし</span>
    <span class="place kanji p6">鎌倉市</span>
    <div class="mesh">
      <span class="s6">09MD121A</span><span>09MD121B</span>
      <span class="s6">09MD122A</span><span>09MD122B</span><span>09MD122C</span>
      <span class="s5">09MD113E</span><span>09MD123A</span><span>09MD123B</span><span>09MD123C</span><span>09MD123D</span>
      <span class="s4">09MD114D</span><span>09MD114E</span><span>09MD124A</span><span>09MD124B</span><span>09MD124C</span><span>09MD124D</span>
      <span class="s4">09MD210D</span><span>09MD210E</span><span>09MD220A</span><span>09MD220B</span><span>09MD220C</span><span>09MD220D</span><span>09MD220E</span>
      <span class="s3">09MD211C</span><span>09MD211D</span><span>09MD211E</span><span>09MD221A</span><span>09MD221B</span><span>09MD221C</span><span>09MD221D</span><span>09MD221E</span><span>09MD231A</span>
      <span class="s2">09MD212B</span><span>09MD212C</span><span>09MD212D</span><span>09MD212E</span><span>09MD222A</span><span>09MD222B</span><span>09MD222C</span><span>09MD222D</span><span>09MD222E</span><span>09MD232A</span>
      <span class="s2">09MD213B</span><span>09MD213C</span><span>09MD213D</span><span>09MD213E</span><span>09MD223A</span><span>09MD223B</span><span>09MD223C</span><span>09MD223D</span><span>09MD223E</span><span>09MD233A</span><span>09MD233B</span>
      <span class="s1">09MD214A</span><span>09MD214B</span><span>09MD214C</span><span>09MD214D</span><span>09MD214E</span><span>09MD224A</span><span>09MD224B</span><span>09MD224C</span><span>09MD224D</span><span>09MD224E</span><span>09MD234A</span><span>09MD234B</span><span>09MD234C</span>
      <span class="s0">09MD300E</span><span>09MD310A</span><span>09MD310B</span><span>09MD310C</span><span>09MD310D</span><span>09MD310E</span><span>09MD320A</span><span>09MD320B</span><span>09MD320C</span><span>09MD320D</span><span>09MD320E</span><span>09MD330A</span><span>09MD330B</span><span>09MD330C</span>
      <span class="s0">09MD301E</span><span>09MD311A</span><span>09MD311B</span><span>09MD311C</span><span>09MD311D</span><span>09MD311E</span><span>09MD321A</span><span>09MD321B</span><span>09MD321C</span><span>09MD321D</span><span>09MD321E</span><span>09MD331A</span><span>09MD331B</span><span>09MD331C</span><span>09MD331D</span>
      <span class="s0">09MD302E</span><span>09MD312A</span><span>09MD312B</span><span>09MD312C</span><span>09MD312D</span><span>09MD312E</span><span>09MD322A</span><span>09MD322B</span><span>09MD322C</span><span>09MD322D</span><span>09MD322E</span><span>09MD332A</span><span>09MD332B</span><span>09MD332C</span><span>09MD332D</span>
      <span class="s1">09MD313A</span><span>09MD313B</span><span>09MD313C</span><span>09MD313D</span><span>09MD313E</span><span>09MD323A</span><span>09MD323B</span><span>09MD323C</span><span>09MD323D</span><span>09MD323E</span><span>09MD333A</span><span>09MD333B</span><span>09MD333C</span><span>09MD333D</span>
      <span class="s2">09MD314B</span><span>09MD314C</span><span>09MD314D</span><span>09MD314E</span><span>09MD324A</span><span>09MD324B</span><span>09MD324C</span><span>09MD324D</span><span>09MD324E</span><span>09MD334A</span><span>09MD334B</span><span>09MD334C</span>
      <span class="s3">09MD410C</span><span>09MD410D</span><span>09MD410E</span><span>09MD420A</span><span>09MD420B</span><span>09MD420C</span><span>09MD420D</span><span>09MD420E</span><span>09MD430A</span><span>09MD430B</span>
      <span class="s5">09MD411E</span><span>09MD421A</span><span>09MD421B</span><span>09MD421C</span><span>09MD421D</span><span>09MD421E</span><span>09MD431A</span><span>09MD431B</span>
      <span class="s6">09MD422A</span><span>09MD422B</span><span>09MD422C</span><span>09MD422D</span><span>09MD422E</span><span>09MD432A</span>
      <span class="s7">09MD423B</span><span>09MD423C</span><span>09MD423D</span><span>09MD423E</span><span>09MD433A</span>
      <span class="s8">09MD424C</span><span>09MD424D</span><span>09MD424E</span>
      <span class="s9">09MD520D</span><span>09MD520E</span>
    </div>
    <svg class="sample" viewBox="263 122 1394 929"><polygon points="886,144 1313,643 1050,1013 455,635"/></svg>
  </div>

  <aside class="rightdock">
    <div class="dockhead rhead"><span><em>プロセシングツール</em>ボックス</span><span class="dockbtn"><svg><use href="#s-float"/></svg><svg><use href="#s-close"/></svg></span></div>
    <div class="dtools rtools">
      <span class="pt"><svg><use href="#p-gears"/></svg></span><i class="dd tiny"></i>
      <span class="pt nm"><svg><use href="#t-py"/></svg></span><i class="dd tiny"></i>
      <span class="pt nm"><svg><use href="#t-clock"/></svg></span>
      <span class="pt"><svg><use href="#p-doc"/></svg></span>
      <i class="rsep"></i>
      <span class="pt"><svg><use href="#p-ypen"/></svg></span>
      <i class="rsep"></i>
      <span class="pt"><svg><use href="#p-wrench"/></svg></span>
    </div>
    <div class="searchbox wide"><svg><use href="#p-search"/></svg><span>検索...</span></div>
    <div class="ptree">
      <div class="row"><i class="tw"><b class="ar"></b></i><svg><use href="#t-clock"/></svg><span>最近使<em>ったツール</em></span></div>
      <div class="row"><i class="tw"><b class="ar"></b></i><svg><use href="#t-q"/></svg><span><em>データベース</em></span></div>
      <div class="row"><i class="tw"><b class="ar"></b></i><svg><use href="#t-q"/></svg><span><em>ネットワーク</em>解析</span></div>
      <div class="row"><i class="tw"><b class="ar"></b></i><svg><use href="#t-q"/></svg><span><em>ファイルツール</em></span></div>
      <div class="row"><i class="tw"><b class="ar"></b></i><svg><use href="#t-q"/></svg><span><em>プロット</em></span></div>
      <div class="row"><i class="tw"><b class="ar"></b></i><svg><use href="#t-q"/></svg><span><em>ベクタオーバーレイ</em></span></div>
      <div class="row"><i class="tw"><b class="ar"></b></i><svg><use href="#t-q"/></svg><span><em>ベクタジオメトリ</em></span></div>
      <div class="row"><i class="tw"><b class="ar"></b></i><svg><use href="#t-q"/></svg><span><em>ベクタタイル</em></span></div>
      <div class="row"><i class="tw"><b class="ar"></b></i><svg><use href="#t-q"/></svg><span><em>ベクタテーブル</em></span></div>
      <div class="row"><i class="tw"><b class="ar"></b></i><svg><use href="#t-q"/></svg><span><em>ベクター般</em></span></div>
      <div class="row"><i class="tw"><b class="ar"></b></i><svg><use href="#t-q"/></svg><span><em>ベクタ</em>解析</span></div>
      <div class="row"><i class="tw"><b class="ar"></b></i><svg><use href="#t-q"/></svg><span><em>ベクタ</em>作成</span></div>
      <div class="row"><i class="tw"><b class="ar"></b></i><svg><use href="#t-q"/></svg><span><em>ベクタ</em>選択</span></div>
      <div class="row"><i class="tw"><b class="ar"></b></i><svg><use href="#t-q"/></svg><span><em>メッシュ</em></span></div>
      <div class="row"><i class="tw"><b class="ar"></b></i><svg><use href="#t-q"/></svg><span><em>ラスタツール</em></span></div>
      <div class="row"><i class="tw"><b class="ar"></b></i><svg><use href="#t-q"/></svg><span><em>ラスタ</em>解析</span></div>
      <div class="row"><i class="tw"><b class="ar"></b></i><svg><use href="#t-q"/></svg><span><em>ラスタ</em>作成</span></div>
      <div class="row"><i class="tw"><b class="ar"></b></i><svg><use href="#t-q"/></svg><span><em>ラスタ</em>地形解析</span></div>
      <div class="row"><i class="tw"><b class="ar"></b></i><svg><use href="#t-q"/></svg><span><em>レイヤツール</em></span></div>
      <div class="row"><i class="tw"><b class="ar"></b></i><svg><use href="#t-q"/></svg><span>地図製作</span></div>
      <div class="row"><i class="tw"><b class="ar"></b></i><svg><use href="#t-q"/></svg><span>内挿</span></div>
      <div class="row"><i class="tw"><b class="ar"></b></i><svg><use href="#t-gdal"/></svg><span class="en">GDAL</span></div>
      <div class="row"><i class="tw"><b class="ar"></b></i><svg><use href="#t-grass"/></svg><span class="en">GRASS</span></div>
      <div class="row"><i class="tw"><b class="ad"></b></i><svg><use href="#t-gear"/></svg><span class="en">JapanBasemap</span></div>
      <div class="row l1 psel"><i class="tw"></i><svg><use href="#t-gear"/></svg><span>国土基本図図郭生成</span></div>
      <div class="row l1"><i class="tw"></i><svg><use href="#t-gear"/></svg><span>地域<em>メッシュ</em>生成</span></div>
      <div class="row"><i class="tw"><b class="ar"></b></i><svg><use href="#t-saga"/></svg><span class="en">SAGA</span></div>
      <div class="row"><i class="tw"><b class="ar"></b></i><svg><use href="#t-py"/></svg><span><em>スクリプト</em></span></div>
    </div>
  </aside>
</main>

<footer class="status">
  <div class="searchbox locator"><svg><use href="#p-search"/></svg><span>検索(Ctrl + K)</span></div>
  <div class="stat">
    <span class="st w-coord">座標</span><span class="field coord">-31336,-66638</span>
    <svg class="mouse"><use href="#s-mouse"/></svg>
    <span class="st w-scale">縮尺</span><span class="field combo">1:50000<b class="cdd"></b></span>
    <svg class="lock"><use href="#s-lock"/></svg>
    <span class="st w-mag">拡大</span><span class="field spin">100%<b class="spn"></b></span>
    <span class="st w-rot">回転</span><span class="field spin">0.0 °<b class="spn"></b></span>
    <i class="chk small"></i><span class="st w-ren">レンダ</span>
    <svg class="eglobe"><use href="#t-ows"/></svg><span class="st epsg">EPSG:6677</span>
    <svg class="chat"><use href="#s-chat"/></svg>
  </div>
</footer>

<aside class="caption">
  <p>出展：地理院タイル(白地図)に図郭と適当な図を追記して掲載</p>
  <p class="url">https://maps.gsi.go.jp/development/ichiran.html</p>
</aside>
</body>
</html>
```

FILE: styles.css
```css
* { box-sizing: border-box; }
html, body { margin: 0; height: 100%; }
body {
  width: 1920px; height: 1080px; overflow: hidden; position: relative;
  display: flex; flex-direction: column;
  font: 12px/1.2 "Liberation Sans", "Noto Sans CJK JP", sans-serif;
  font-feature-settings: "palt"; color: #111; background: #f0f0f0;
}
.defs { position: absolute; width: 0; height: 0; }
i, b { font-style: normal; font-weight: 400; }
em { font-style: normal; font-size: 10.500px; letter-spacing: -.8px; }
.en { font-size: 11px; letter-spacing: .05px; }
.tight { letter-spacing: -1px; }

.titlebar { height: 23px; background: #fff; display: flex; align-items: center; flex: none; }
.tlogo { width: 15px; height: 16px; margin-left: 2px; }
.ttext { margin-left: 6px; font-size: 12px; padding-top: 2px; }
.winctl { margin-left: auto; display: flex; gap: 33px; padding-right: 19px; }
.winctl svg { width: 12px; height: 12px; }

.menubar { height: 20px; flex: none; display: grid; grid-template-columns: 79px 51px 54px 56px 51px 74px 58px 55px 83px 57px 67px 86px 60px; align-items: center; padding: 3px 0 0 10px; background: #f0f0f0; border-bottom: 1px solid #c9c9c9; white-space: nowrap; }

.toolbar { height: 39px; flex: none; display: flex; align-items: center; background: linear-gradient(#f7f7f7, #eeeeee); border-bottom: 1px solid #b9b9b9; }
.toolbar.second { height: 39px; border-bottom-width: 2px; border-bottom-color: #b0b0b0; }
.ic { width: 33px; height: 30px; flex: none; display: flex; align-items: center; justify-content: center; }
.ic.push3 { margin-left: 3px; }
.ic svg { width: 24px; height: 24px; }
.ic svg.big { width: 28px; height: 28px; }
.ic.on { background: #dcdcdc; border: 1px solid #aeaeae; border-radius: 3px; }
.hd { width: 16px; height: 20px; flex: none; display: flex; justify-content: center; }
.hd.first { width: 12.5px; justify-content: flex-end; padding-right: 3px; }
.hd.short { width: 12px; justify-content: flex-start; }
.hd.w15 { width: 15px; }
.hd.w17 { width: 17px; }
.hd.w19 { width: 19px; }
.hd::before { content: ""; width: 4px; height: 20px; background-image: radial-gradient(circle, #b2b2b2 0 .8px, transparent 1px); background-size: 2px 3px; }
.sp { width: 6px; height: 24px; flex: none; display: flex; justify-content: center; }
.sp.mid { width: 8px; }
.sp.wide { width: 12px; }
.sp::before { content: ""; width: 1px; background: #c8c8c8; }
.dd { width: 11px; height: 30px; flex: none; display: flex; align-items: center; justify-content: center; }
.dd::before { content: ""; border: 4px solid transparent; border-top: 4px solid #555; border-bottom: 0; }
.dd.off::before { border-top-color: #bbb; }
.dd.tiny { width: 0; height: 24px; position: relative; left: -3px; top: 4px; }
.dd.small { width: 12px; }

.main { height: 930px; flex: none; display: flex; background: #f0f0f0; }
.leftdock { width: 257px; flex: none; display: flex; flex-direction: column; }
.vgrip { width: 5px; flex: none; display: flex; align-items: center; justify-content: center; }
.vgrip::before { content: ""; width: 2px; height: 17px; background-image: radial-gradient(circle, #b5b5b5 0 .7px, transparent 1px); background-size: 2px 3px; }
.hgrip { height: 7px; flex: none; display: flex; justify-content: center; }
.hgrip::before { content: ""; width: 17px; height: 2px; margin-top: 2px; background-image: radial-gradient(circle, #b5b5b5 0 .7px, transparent 1px); background-size: 3px 2px; }

.dock { display: flex; flex-direction: column; }
.browser { height: 512px; flex: none; }
.layers { flex: 1; min-height: 0; }
.dockhead { height: 18px; flex: none; display: flex; align-items: center; justify-content: space-between; padding: 0 3px 0 4px; }
.dockhead > span:first-child { font-size: 12px; padding-top: 2px; }
.dockbtn { display: flex; gap: 3px; }
.dockbtn svg { width: 11px; height: 11px; }
.dtools { height: 31px; flex: none; display: flex; align-items: center; padding-left: 4px; }
.dtools.tall { height: 32px; }
.pt { width: 25px; height: 24px; flex: none; display: flex; align-items: center; justify-content: center; }
.pt svg { width: 18px; height: 18px; }
.tree { background: #fff; border: 1px solid #aeaeae; overflow: hidden; }
.bt { flex: 1; min-height: 0; display: flex; margin-left: 0; }
.list { flex: 1; overflow: hidden; min-width: 0; }
.row { height: 18px; display: flex; align-items: center; white-space: nowrap; }
.row > span { padding-top: 3px; }
.row svg { width: 16px; height: 16px; flex: none; margin-right: 5px; }
.row.l1 { padding-left: 20px; }
.row.l2 { padding-left: 40px; }
.row.sel { width: 183px; background: #eeeeee; }
.tw { width: 25px; flex: none; padding-left: 7px; display: flex; align-items: center; }
.ar { border: 4px solid transparent; border-left: 5px solid #555; border-right: 0; }
.ad { border: 4px solid transparent; border-top: 5px solid #555; border-bottom: 0; margin-left: -1px; }

.vscroll { width: 14px; flex: none; display: flex; flex-direction: column; border-left: 1px solid #d8d8d8; }
.up, .down { height: 14px; flex: none; display: flex; align-items: center; justify-content: center; background: #f5f5f5; }
.up::before { content: ""; border: 4px solid transparent; border-bottom: 4px solid #555; border-top: 0; }
.down::before { content: ""; border: 4px solid transparent; border-top: 4px solid #555; border-bottom: 0; }
.thumb { flex: 1; background: linear-gradient(90deg, #fafafa, #ffffff); border-top: 1px solid #ddd; border-bottom: 1px solid #ccc; }
.trk { height: 47px; flex: none; background: #e4e4e4; }

.lt { flex: 1; min-height: 0; }
.lrow { height: 18px; display: flex; align-items: center; white-space: nowrap; }
.tw2 { width: 22px; flex: none; padding-left: 7px; display: flex; align-items: center; }
.chk { width: 14px; height: 14px; flex: none; background: #fff; border: 1px solid #999; position: relative; }
.chk::after { content: ""; position: absolute; left: 4px; top: 0; width: 5px; height: 9px; border: solid #111; border-width: 0 2px 2px 0; transform: rotate(40deg); }
.swatch { width: 16px; height: 16px; flex: none; margin-left: 7px; }
.fillsw { background: #fee9c3; border: 1px solid #f5b800; }
.redsw { background: #fff; border: 1px solid #ee3333; }
.lt-ic { width: 14px; height: 14px; flex: none; margin-left: 8px; }
.lname { margin-left: 6px; padding-top: 3px; }
.lt-ic + .lname { margin-left: 8px; }
.lname.cur { flex: 1; margin-left: 3px; padding: 2px 0 0 3px; align-self: stretch; display: flex; align-items: center; background: #f5fafe; border: 1px solid #b5d8f0; font-size: 11.5px; }
.memi { width: 18px; height: 18px; margin-left: auto; margin-right: 5px; }

.canvas { width: 1396px; flex: none; position: relative; overflow: hidden; background: #fff; border: solid #aeaeae; border-width: 0 1px 1px 1px; }
.basemap, .sample { position: absolute; left: 0; top: 0; width: 1394px; height: 929px; }
.coast polyline { fill: none; stroke: #c4c4c4; stroke-width: 1.100; vector-effect: non-scaling-stroke; }
.coast polyline.dark { stroke: #666; }
.sample polygon { fill: none; stroke: #f8502a; stroke-width: 2.400; }
.place { position: absolute; color: #6f6f6f; white-space: nowrap; font-family: "Noto Sans CJK JP", sans-serif; font-feature-settings: normal; line-height: 1; }
.kana { font-size: 18.500px; }
.kanji { font-size: 22.500px; }
.p1 { left: 354px; top: 508px; }
.p2 { left: 364px; top: 530px; }
.p3 { left: -13px; top: 684px; }
.p4 { left: -9px; top: 707px; }
.p5 { left: 954px; top: 758px; }
.p6 { left: 967px; top: 782px; }

.mesh { position: absolute; left: 172px; top: 15px; display: grid; grid-template-columns: repeat(15, 60.47px); grid-auto-rows: 45.4px; }
.mesh span { margin: -1px; padding-top: 2px; border: 2px solid #ffc000; background: rgba(253, 188, 60, .3); color: #5252e4; font-size: 10.200px; display: flex; align-items: center; justify-content: center; white-space: nowrap; font-family: "Liberation Sans", sans-serif; }
.s0 { grid-column-start: 1; } .s1 { grid-column-start: 2; } .s2 { grid-column-start: 3; } .s3 { grid-column-start: 4; } .s4 { grid-column-start: 5; }
.s5 { grid-column-start: 6; } .s6 { grid-column-start: 7; } .s7 { grid-column-start: 8; } .s8 { grid-column-start: 9; } .s9 { grid-column-start: 10; }

.rightdock { width: 262px; flex: none; display: flex; flex-direction: column; padding-left: 7px; }
.rhead { padding-left: 3px; margin-left: 0; }
.rtools { padding-left: 2px; height: 32px; }
.rsep { width: 1px; height: 20px; margin: 0 3px; background: #d0d0d0; flex: none; }
.searchbox { display: flex; align-items: center; background: #fff; border: 1px solid #b5b5b5; border-radius: 3px; color: #777; flex: none; height: 21px; }
.searchbox svg { width: 13px; height: 13px; margin-left: 8px; margin-right: 8px; flex: none; }
.searchbox span { padding-top: 2px; }
.searchbox.wide { margin-right: 2px; padding-left: 1px; }
.ptree { flex: 1; min-height: 0; background: #fff; border: 1px solid #c4c4c4; border-width: 1px 0 1px 1px; overflow: hidden; }
.ptree .tw { width: 23px; }
.ptree .row svg { margin-right: 6px; }
.psel { background: #eeeeee; }

.status { flex: 1; display: flex; align-items: center; padding-left: 4px; font-size: 11px; }
.locator { width: 200px; height: 22px; }
.locator svg { margin-left: 7px; margin-right: 8px; }
.stat { margin-left: auto; display: flex; align-items: center; width: 696px; height: 22px; }
.st { flex: none; white-space: nowrap; }
.w-coord { margin-left: 0; width: 26px; }
.field { height: 21px; flex: none; display: flex; align-items: center; background: #fff; border: 1px solid #b5b5b5; border-radius: 3px; padding-left: 4px; font-size: 10px; position: relative; white-space: nowrap; }
.coord { width: 88px; padding-left: 5px; letter-spacing: .6px; }
.mouse { width: 17px; height: 17px; margin-left: 4px; flex: none; }
.w-scale { margin-left: 12px; width: 26px; }
.combo { width: 78px; padding-left: 2px; }
.cdd { position: absolute; right: 0; top: 0; bottom: 0; width: 20px; border-left: 1px solid #ddd; }
.cdd::before { content: ""; position: absolute; left: 6px; top: 7px; border: 4px solid transparent; border-top: 5px solid #555; border-bottom: 0; }
.lock { width: 12px; height: 18px; margin-left: 12px; flex: none; }
.w-mag { margin-left: 8px; width: 26px; }
.spin { width: 82px; padding-left: 6px; }
.spn { position: absolute; right: 0; top: 0; bottom: 0; width: 14px; border-left: 1px solid #ddd; }
.spn::before { content: ""; position: absolute; left: 3px; top: 3px; border: 4px solid transparent; border-bottom: 5px solid #666; border-top: 0; }
.spn::after { content: ""; position: absolute; left: 3px; bottom: 3px; border: 4px solid transparent; border-top: 5px solid #666; border-bottom: 0; }
.w-rot { margin-left: 10px; width: 31px; }
.chk.small { margin-left: 8px; }
.w-ren { margin-left: 5px; font-size: 10px; width: 26px; }
.eglobe { width: 15px; height: 15px; margin-left: 12px; flex: none; }
.epsg { margin-left: 3px; font-size: 10px; width: 60px; }
.chat { width: 18px; height: 18px; margin-left: 15px; flex: none; }

.caption { position: absolute; left: 1107px; top: 927px; width: 791px; height: 97px; background: #fff; border: 5px solid #000; color: #000; font-family: "Noto Sans", "Noto Sans CJK JP", sans-serif; font-feature-settings: normal; font-weight: 300; }
.caption p { margin: 0; font-size: 27.500px; line-height: 42px; white-space: nowrap; padding-left: 8px; }
.caption .url { padding-left: 94px; font-size: 29.500px; }
```
